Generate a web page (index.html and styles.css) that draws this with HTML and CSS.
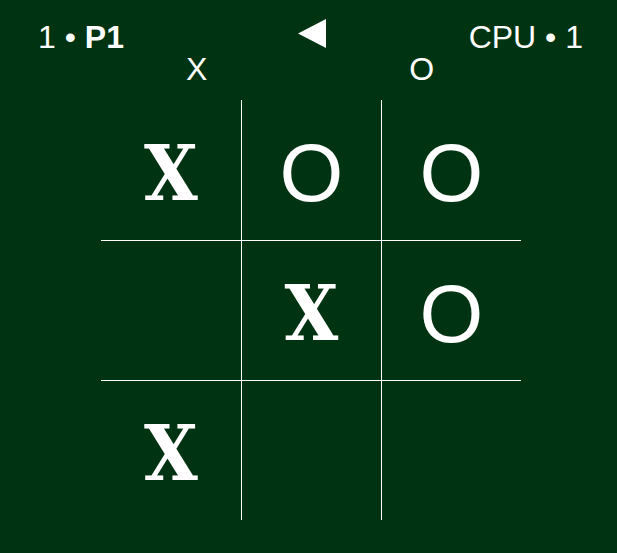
FILE: index.html
```html
<!DOCTYPE html>
<html>
<head>
<meta charset="utf-8">
<link rel="stylesheet" href="styles.css">
</head>
<body>
<div class="game">
  <div class="scores">
    <div class="score score-left">1 • <b>P1</b></div>
    <div class="turn"><svg width="28" height="29" viewBox="0 0 28 29"><polygon points="0,14.5 28,0 28,29" fill="#fff"/></svg></div>
    <div class="score score-right">CPU • 1</div>
  </div>
  <div class="marks">
    <span class="mark-label">X</span>
    <span class="mark-label">O</span>
  </div>
  <div class="board">
    <div class="cell x">X</div>
    <div class="cell o">O</div>
    <div class="cell o">O</div>
    <div class="cell"></div>
    <div class="cell x">X</div>
    <div class="cell o">O</div>
    <div class="cell x">X</div>
    <div class="cell"></div>
    <div class="cell"></div>
  </div>
</div>
</body>
</html>
```
FILE: styles.css
```css
html, body {
  margin: 0;
  padding: 0;
  background: #003311;
}
body {
  color: #ffffff;
  font-family: "Liberation Sans", Arial, sans-serif;
  font-size: 32px;
  width: 617px;
  height: 553px;
  overflow: hidden;
}
.scores {
  display: grid;
  grid-template-columns: 1fr auto 1fr;
  align-items: start;
  padding: 21px 34px 0 38px;
  line-height: 32px;
}
.score-right {
  text-align: right;
}
.turn {
  display: flex;
  margin-left: 3px;
  margin-top: -2px;
}
.turn svg {
  display: block;
}
.marks {
  display: flex;
  gap: 202px;
  padding-left: 186px;
  line-height: 32px;
}
.board {
  display: grid;
  grid-template-columns: repeat(3, 140px);
  grid-template-rows: repeat(3, 140px);
  margin: 15px 0 0 101px;
}
.cell {
  box-sizing: border-box;
  display: flex;
  align-items: center;
  justify-content: center;
  line-height: 1;
}
.cell:nth-child(3n+2),
.cell:nth-child(3n+3) {
  border-left: 1px solid #ffffff;
}
.cell:nth-child(n+4) {
  border-top: 1px solid #ffffff;
}
.x {
  font-family: "DejaVu Serif", serif;
  font-stretch: condensed;
  font-weight: bold;
  font-size: 77px;
  padding-top: 6px;
}
.o {
  font-family: "Liberation Sans", Arial, sans-serif;
  font-size: 82px;
  padding-top: 6px;
}
```
